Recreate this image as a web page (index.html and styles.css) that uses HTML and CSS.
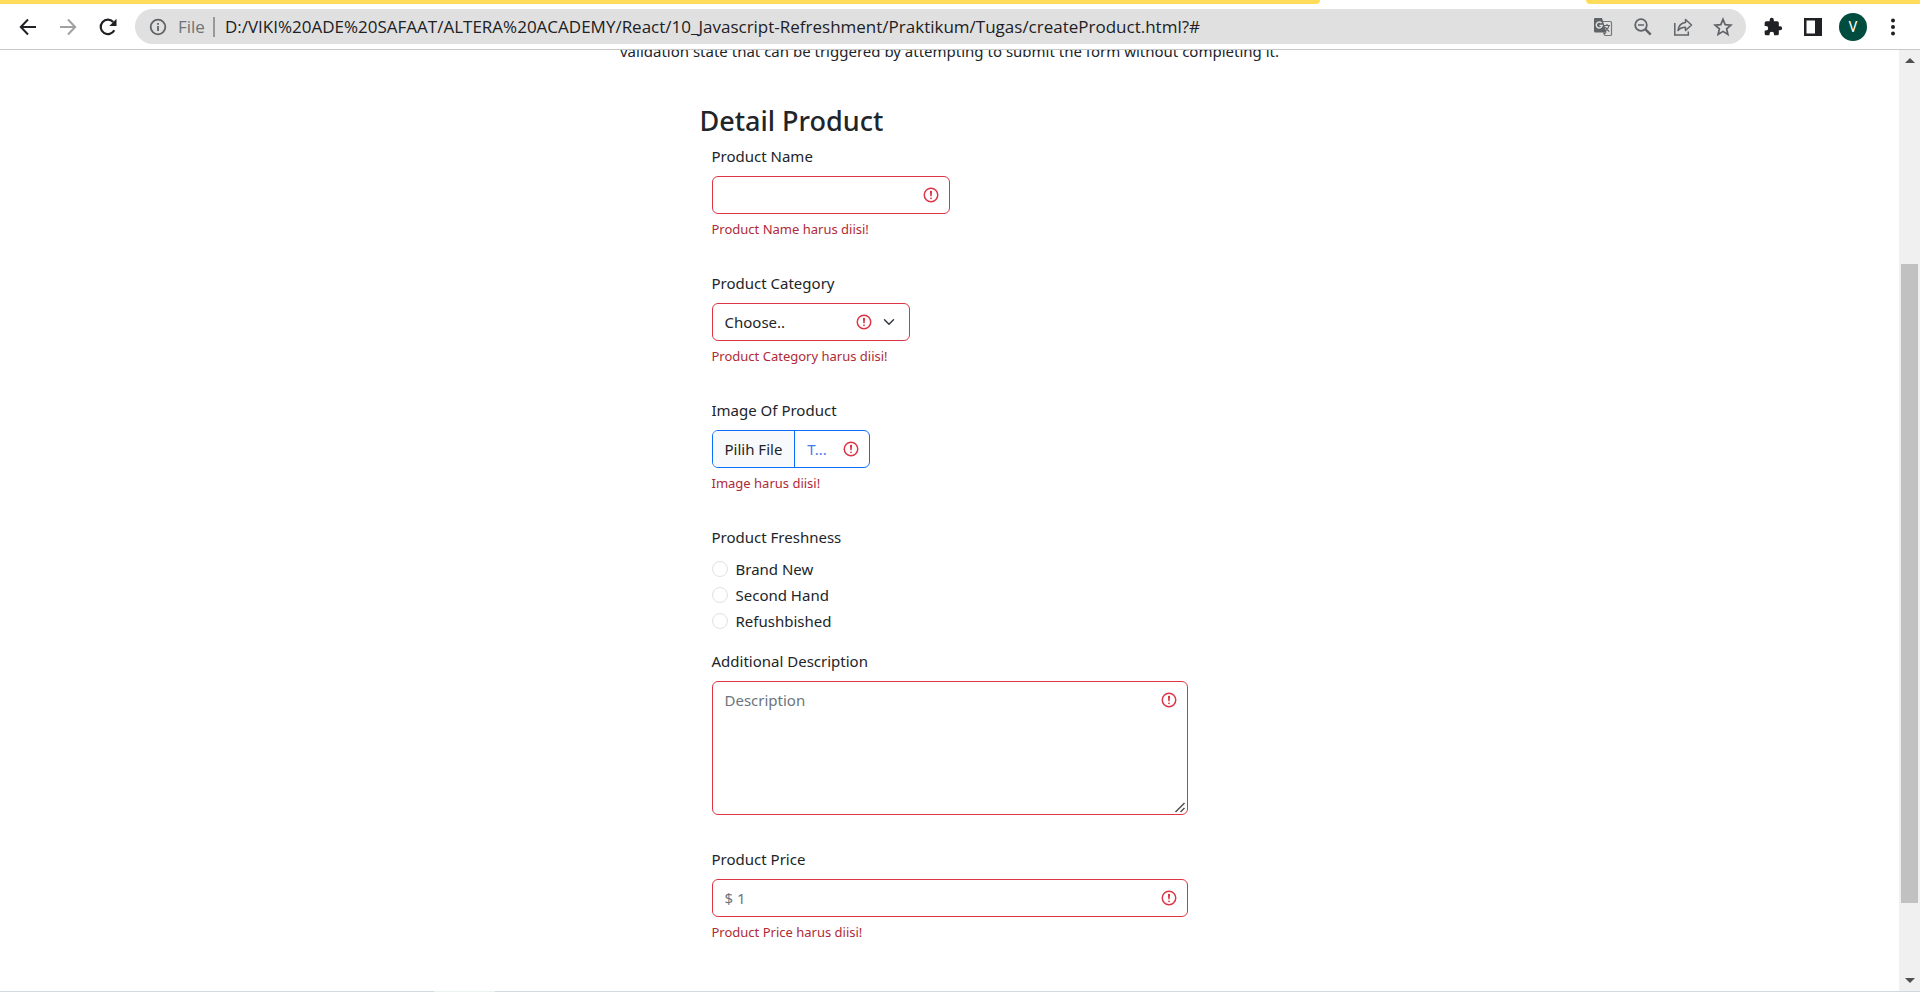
FILE: index.html
```html
<!DOCTYPE html>
<html lang="id">
<head>
<meta charset="utf-8">
<title>Create Product</title>
<link rel="stylesheet" href="styles.css">
</head>
<body>
<div class="tabstrip"><span class="tabs-left"></span><span class="tab-active"></span><span class="tabs-right"></span></div>
<header class="toolbar">
  <button class="tool" aria-label="Back"><svg width="20" height="20" viewBox="0 0 20 20" fill="none" stroke="#202124" stroke-width="2"><path d="M18 10H3M10 2.500L2.800 10l7.200 7.500"/></svg></button>
  <button class="tool" aria-label="Forward"><svg width="20" height="20" viewBox="0 0 20 20" fill="none" stroke="#a0a1a3" stroke-width="2"><path d="M2 10h15M10 2.500L17.200 10 10 17.500"/></svg></button>
  <button class="tool" aria-label="Reload"><svg width="20" height="20" viewBox="0 0 20 20"><path d="M16.300 13.200A7.200 7.200 0 1 1 15.200 5" fill="none" stroke="#202124" stroke-width="2.200"/><path d="M18.500 1.800V9h-7.200z" fill="#202124"/></svg></button>
  <div class="omnibox">
    <svg class="info" width="18" height="18" viewBox="0 0 18 18"><circle cx="9" cy="9" r="7.300" fill="none" stroke="#5f6368" stroke-width="1.800"/><path d="M8.100 8h1.800v5H8.100zM8.100 5h1.800v1.800H8.100z" fill="#5f6368"/></svg>
    <span class="scheme">File</span>
    <input class="url" type="text" aria-label="Address" value="D:/VIKI%20ADE%20SAFAAT/ALTERA%20ACADEMY/React/10_Javascript-Refreshment/Praktikum/Tugas/createProduct.html?#">
    <button class="tool" aria-label="Translate"><svg width="20" height="20" viewBox="0 0 20 20"><path d="M10 4.500h7.500a1 1 0 0 1 1 1v12a1 1 0 0 1-1 1h-6" fill="none" stroke="#77797c" stroke-width="1.200"/><path d="M2 1h7l4.500 14.500H2.500A1.500 1.500 0 0 1 1 14V2a1 1 0 0 1 1-1z" fill="#5f6368"/><path d="M8.500 6a3 3 0 1 0 .7 2.500H6.500" fill="none" stroke="#e0e0e0" stroke-width="1.400"/><path d="M11 8.500h6M14 7v1.500M16 8.500c-.5 2.500-2 4.500-3.500 5.500M12.300 10c1 2 2.500 3.500 4 4.500" fill="none" stroke="#5f6368" stroke-width="1.200"/><path d="M10 15.500h3.500L11 18.500z" fill="#5f6368"/></svg></button>
    <button class="tool" aria-label="Zoom"><svg width="20" height="20" viewBox="0 0 20 20" fill="none" stroke="#5f6368"><circle cx="8" cy="8" r="5.800" stroke-width="1.800"/><path d="M5 8h6" stroke-width="1.500"/><path d="M12.200 12.200l5.500 5.500" stroke-width="2.400"/></svg></button>
    <button class="tool" aria-label="Share"><svg width="20" height="20" viewBox="0 0 20 20" fill="none" stroke="#5f6368" stroke-width="1.500"><path d="M1.800 6v12h13.500v-3.500"/><path d="M12.500 2.500l6 5.500-6 5.500v-3.200c-3.500 0-5.700 1-7.500 3.200.5-4.500 3-7.500 7.500-8z" stroke-linejoin="round"/></svg></button>
    <button class="tool" aria-label="Bookmark"><svg width="20" height="20" viewBox="0 0 20 20"><path d="M10 2.300l2.200 5.300 5.700.5-4.300 3.700 1.300 5.600-4.900-3-4.900 3 1.300-5.600-4.300-3.700 5.700-.5z" fill="none" stroke="#5f6368" stroke-width="1.700"/></svg></button>
  </div>
  <button class="tool" aria-label="Extensions"><svg width="20" height="20" viewBox="0 0 24 24"><path d="M20.500 11H19V7a2 2 0 0 0-2-2h-4V3.500a2.500 2.500 0 0 0-5 0V5H4a2 2 0 0 0-2 2v3.800h1.500a2.700 2.700 0 0 1 0 5.400H2V20a2 2 0 0 0 2 2h3.800v-1.500a2.700 2.700 0 0 1 5.400 0V22H17a2 2 0 0 0 2-2v-4h1.500a2.500 2.500 0 0 0 0-5z" fill="#202124"/></svg></button>
  <button class="tool" aria-label="Side panel"><svg width="20" height="20" viewBox="0 0 20 20"><path d="M1 1h18v18H1zM3.500 3.500v13h8.500v-13z" fill="#202124" fill-rule="evenodd"/></svg></button>
  <button class="tool" aria-label="Profile"><span class="avatar">V</span></button>
  <button class="tool" aria-label="Menu"><svg width="20" height="20" viewBox="0 0 20 20" fill="#202124"><circle cx="10" cy="3.500" r="2"/><circle cx="10" cy="10" r="2"/><circle cx="10" cy="16.500" r="2"/></svg></button>
</header>
<div class="viewport">
  <main class="page">
    <p class="lead">validation state that can be triggered by attempting to submit the form without completing it.</p>
    <form class="form" novalidate>
      <h1 class="title">Detail Product</h1>
      <div class="field">
        <label class="label" for="name">Product Name</label>
        <input class="control w-half" id="name" type="text">
        <p class="feedback">Product Name harus diisi!</p>
      </div>
      <div class="field">
        <label class="label" for="category">Product Category</label>
        <select class="control select" id="category"><option>Choose..</option></select>
        <p class="feedback">Product Category harus diisi!</p>
      </div>
      <div class="field">
        <label class="label" for="image">Image Of Product</label>
        <label class="control file"><input class="file-input" id="image" type="file"><span class="file-button">Pilih File</span><span class="file-name">T...</span></label>
        <p class="feedback">Image harus diisi!</p>
      </div>
      <fieldset class="field radios">
        <legend class="label">Product Freshness</legend>
        <label class="check"><input class="radio" type="radio" name="fresh">Brand New</label>
        <label class="check"><input class="radio" type="radio" name="fresh">Second Hand</label>
        <label class="check"><input class="radio" type="radio" name="fresh">Refushbished</label>
      </fieldset>
      <div class="field">
        <label class="label" for="description">Additional Description</label>
        <textarea class="control area" id="description" placeholder="Description"></textarea>
      </div>
      <div class="field">
        <label class="label" for="price">Product Price</label>
        <input class="control" id="price" type="text" placeholder="$ 1">
        <p class="feedback">Product Price harus diisi!</p>
      </div>
    </form>
  </main>
  <div class="scrollbar">
    <button class="scroll-button" aria-label="Scroll up"><svg width="10" height="5" viewBox="0 0 10 5"><path d="M0 5l5-5 5 5z" fill="#505050"/></svg></button>
    <div class="track"><span class="thumb"></span></div>
    <button class="scroll-button" aria-label="Scroll down"><svg width="10" height="5" viewBox="0 0 10 5"><path d="M0 0h10L5 5z" fill="#505050"/></svg></button>
  </div>
</div>
<div class="edge"><span class="edge-light"></span></div>
</body>
</html>
```
FILE: styles.css
```css
* { box-sizing: border-box; }
body {
  margin: 0;
  height: 100vh;
  display: flex;
  flex-direction: column;
  overflow: hidden;
  background: #fff;
  color: #212529;
  font: 15px/24px "Noto Sans", "Open Sans", sans-serif;
}
button, input, select, textarea { font: inherit; color: inherit; }
p, h1, fieldset { margin: 0; }

.tabstrip { display: flex; flex: none; height: 4px; }
.tabs-left { flex: 1320; background: #ffdd5b; border-bottom-right-radius: 4px; }
.tab-active { flex: 266; }
.tabs-right { flex: 334; background: #ffdd5b; border-bottom-left-radius: 4px; }

.toolbar {
  display: flex;
  flex: none;
  align-items: center;
  height: 46px;
  padding: 0 7px 0 8px;
  border-bottom: 1px solid #c8c8c8;
}
.tool {
  display: flex;
  flex: none;
  align-items: center;
  justify-content: center;
  width: 40px;
  height: 32px;
  padding: 0;
  border: 0;
  background: none;
}
.omnibox {
  display: flex;
  flex: 1;
  align-items: center;
  min-width: 0;
  height: 35px;
  margin: 0 7px;
  padding: 0 3px 0 14px;
  border-radius: 18px;
  background: #e0e0e0;
  font-family: "Open Sans", "Noto Sans", sans-serif;
  font-size: 17px;
}
.info { flex: none; }
.scheme {
  margin: 0 10px 0 11px;
  padding-right: 8px;
  border-right: 2px solid #999;
  color: #6f7276;
  line-height: 20px;
}
.url {
  flex: 1;
  min-width: 0;
  padding: 0;
  border: 0;
  outline: 0;
  background: none;
  color: #202124;
}
.avatar {
  width: 28px;
  height: 28px;
  border-radius: 50%;
  background: #004d40;
  color: #fff;
  font: 14px/28px Roboto, sans-serif;
}

.viewport { display: flex; flex: 1; min-height: 0; }
.page { flex: 1; overflow: hidden; }
.lead { margin-top: -11px; text-align: center; }
.form { max-width: 500px; margin: 41px auto 0; }
.title { margin-bottom: 6px; font-size: 27px; line-height: 34px; font-weight: 500; }
.field { margin: 0 12px 32px; padding: 0; border: 0; }
.label { display: block; margin-bottom: 8px; padding: 0; }
.control {
  --error: url("data:image/svg+xml,%3csvg xmlns='http://www.w3.org/2000/svg' viewBox='0 0 12 12' fill='none' stroke='%23dc3545'%3e%3ccircle cx='6' cy='6' r='4.5'/%3e%3cpath stroke-linejoin='round' d='M5.8 3.6h.4L6 6.5z'/%3e%3ccircle cx='6' cy='8.2' r='.6' fill='%23dc3545' stroke='none'/%3e%3c/svg%3e");
  display: block;
  width: 100%;
  height: 38px;
  padding: 6px 36px 6px 12px;
  border: 1px solid #dc3545;
  border-radius: 6px;
  background: #fff var(--error) no-repeat right 9px center / 18px 18px;
}
.control::placeholder { color: #6c757d; opacity: 1; }
.w-half { width: 50%; }
.select {
  --chevron: url("data:image/svg+xml,%3csvg xmlns='http://www.w3.org/2000/svg' viewBox='0 0 16 16'%3e%3cpath fill='none' stroke='%23343a40' stroke-linecap='round' stroke-linejoin='round' stroke-width='2' d='m2 5 6 6 6-6'/%3e%3c/svg%3e");
  width: 198px;
  padding-right: 66px;
  appearance: none;
  background-image: var(--chevron), var(--error);
  background-position: right 12px center, right 36px center;
  background-size: 16px 12px, 18px 18px;
}
.file { display: flex; width: 158px; padding: 0; overflow: hidden; border-color: #0d6efd; }
.file-input { position: absolute; width: 1px; height: 1px; opacity: 0; }
.file-button { padding: 6px 12px; border-right: 1px solid #0d6efd; background: #f8f9fa; white-space: nowrap; }
.file-name { padding: 6px 12px; color: #3f7be8; }
.area { height: 134px; background-position: right 9px top 9px; resize: vertical; }
.area::-webkit-resizer {
  background: url("data:image/svg+xml,%3csvg xmlns='http://www.w3.org/2000/svg' width='15' height='15' viewBox='0 0 15 15'%3e%3cpath d='M3.500 13L12.500 4M8.500 13L12.500 9' fill='none' stroke='%23505050' stroke-width='1.500'/%3e%3c/svg%3e") no-repeat right bottom;
}
.feedback { margin-top: 5px; color: #b02a37; font-size: 13px; line-height: 20px; }
.radios { margin-bottom: 16px; }
.check { display: flex; align-items: center; gap: 8px; margin-bottom: 2px; }
.check:last-child { margin-bottom: 0; }
.radio {
  width: 16px;
  height: 16px;
  margin: 0;
  border: 1px solid #dee2e6;
  border-radius: 50%;
  appearance: none;
}

.scrollbar { display: flex; flex: none; flex-direction: column; width: 21px; background: #f0f0f0; }
.scroll-button {
  display: flex;
  align-items: center;
  justify-content: center;
  height: 21px;
  padding: 0;
  border: 0;
  background: none;
}
.track { display: grid; flex: 1; grid-template-rows: 193fr 639fr 67fr; padding: 0 2px; }
.thumb { grid-row: 2; background: #c1c1c1; }

.edge { flex: none; height: 1px; padding-left: 434px; background: #cfdadf; }
.edge-light { display: block; width: 61px; height: 1px; background: #e8f2f2; }
```
